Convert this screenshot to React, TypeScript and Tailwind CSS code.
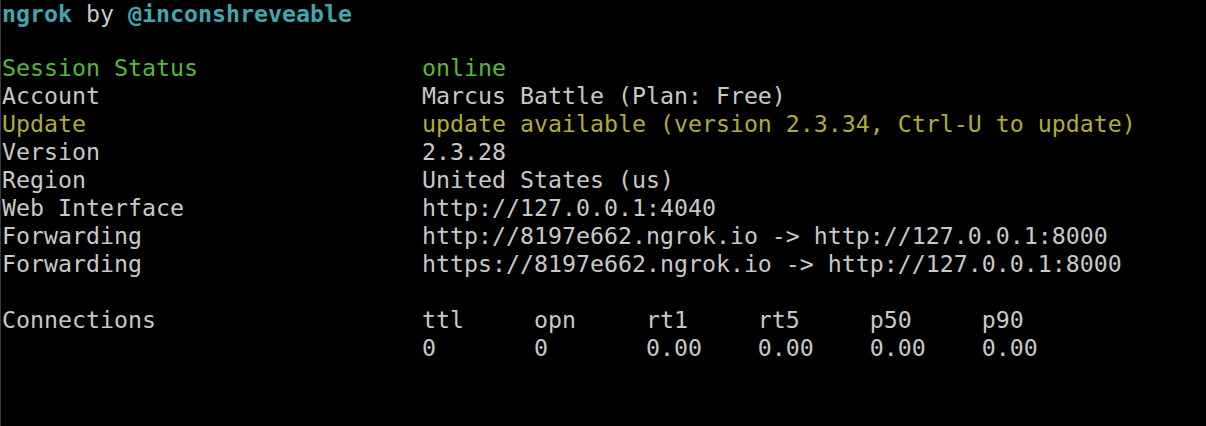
import React from "react";

type Seg = { t: string; c?: string; b?: boolean };

const W = "text-[#c8c8c8]";
const G = "text-[#55b93b]";
const Y = "text-[#adad34]";
const C = "text-[#42a5ae]";

const pad = (s: string, n: number) => s + " ".repeat(Math.max(0, n - s.length));

const lines: Seg[][] = [
  [],
  [{ t: pad("Session Status", 30) + "online", c: G }],
  [{ t: pad("Account", 30) + "Marcus Battle (Plan: Free)", c: W }],
  [{ t: pad("Update", 30) + "update available (version 2.3.34, Ctrl-U to update)", c: Y }],
  [{ t: pad("Version", 30) + "2.3.28", c: W }],
  [{ t: pad("Region", 30) + "United States (us)", c: W }],
  [{ t: pad("Web Interface", 30) + "http://127.0.0.1:4040", c: W }],
  [{ t: pad("Forwarding", 30) + "http://8197e662.ngrok.io -> http://127.0.0.1:8000", c: W }],
  [{ t: pad("Forwarding", 30) + "https://8197e662.ngrok.io -> http://127.0.0.1:8000", c: W }],
  [],
  [
    {
      t:
        pad("Connections", 30) +
        pad("ttl", 8) +
        pad("opn", 8) +
        pad("rt1", 8) +
        pad("rt5", 8) +
        pad("p50", 8) +
        "p90",
      c: W,
    },
  ],
  [
    {
      t:
        pad("", 30) +
        pad("0", 8) +
        pad("0", 8) +
        pad("0.00", 8) +
        pad("0.00", 8) +
        pad("0.00", 8) +
        "0.00",
      c: W,
    },
  ],
];

export default function App() {
  return (
    <div
      className="w-[1206px] h-[426px] bg-black overflow-hidden border-l border-[#3a3a3a] pl-[1px]"
      style={{ fontFamily: '"DejaVu Sans Mono", "Liberation Mono", monospace' }}
    >
      <div className="text-[23.25px] leading-[28px]">
        <div className="h-[26px] leading-[27px] whitespace-pre">
          <span className={`${C} font-bold`}>ngrok</span>
          <span className={W}> by </span>
          <span className={`${C} font-bold`}>@inconshreveable</span>
        </div>
        {lines.map((segs, i) => (
          <div key={i} className="h-[28px] whitespace-pre">
            {segs.map((s, j) => (
              <span key={j} className={`${s.c ?? W} ${s.b ? "font-bold" : ""}`}>
                {s.t}
              </span>
            ))}
          </div>
        ))}
      </div>
    </div>
  );
}
